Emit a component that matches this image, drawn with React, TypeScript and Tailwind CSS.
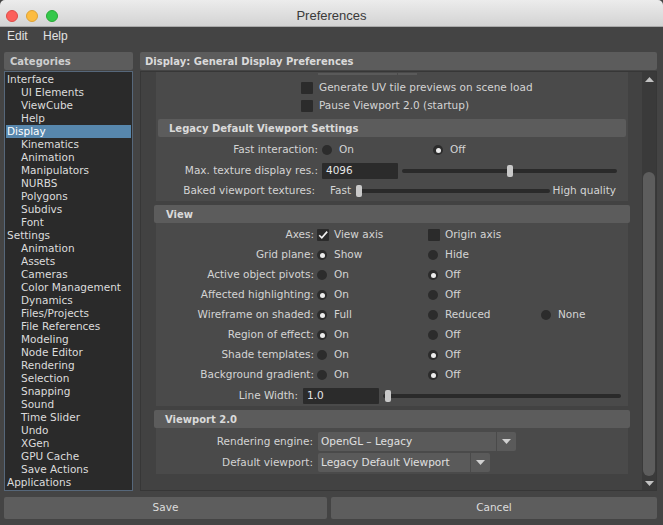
import React from "react";

const categories: { name: string; sub?: boolean; selected?: boolean }[] = [
  { name: "Interface" },
  { name: "UI Elements", sub: true },
  { name: "ViewCube", sub: true },
  { name: "Help", sub: true },
  { name: "Display", selected: true },
  { name: "Kinematics", sub: true },
  { name: "Animation", sub: true },
  { name: "Manipulators", sub: true },
  { name: "NURBS", sub: true },
  { name: "Polygons", sub: true },
  { name: "Subdivs", sub: true },
  { name: "Font", sub: true },
  { name: "Settings" },
  { name: "Animation", sub: true },
  { name: "Assets", sub: true },
  { name: "Cameras", sub: true },
  { name: "Color Management", sub: true },
  { name: "Dynamics", sub: true },
  { name: "Files/Projects", sub: true },
  { name: "File References", sub: true },
  { name: "Modeling", sub: true },
  { name: "Node Editor", sub: true },
  { name: "Rendering", sub: true },
  { name: "Selection", sub: true },
  { name: "Snapping", sub: true },
  { name: "Sound", sub: true },
  { name: "Time Slider", sub: true },
  { name: "Undo", sub: true },
  { name: "XGen", sub: true },
  { name: "GPU Cache", sub: true },
  { name: "Save Actions", sub: true },
  { name: "Applications" },
];

function Radio({ on }: { on?: boolean }) {
  return (
    <span className="w-[10px] h-[10px] rounded-full bg-[#2c2c2c] flex items-center justify-center shrink-0">
      {on && <span className="w-[5px] h-[5px] rounded-full bg-[#ededed]" />}
    </span>
  );
}

function Check({ on }: { on?: boolean }) {
  return (
    <span className="w-[12px] h-[12px] rounded-[1px] bg-[#2b2b2b] shrink-0 flex items-center justify-center">
      {on && (
        <svg width="12" height="12" viewBox="0 0 12 12">
          <polyline points="2.2,6.2 4.8,8.8 10.2,2.6" fill="none" stroke="#f2f2f2" strokeWidth="1.6" />
        </svg>
      )}
    </span>
  );
}

function Option({ label, on, w }: { label: string; on?: boolean; w: string }) {
  return (
    <div className={`flex items-center gap-[7px] ${w}`}>
      <Radio on={on} />
      <span>{label}</span>
    </div>
  );
}

function Slider({ left }: { left: number }) {
  return (
    <div className="relative flex-1 h-[4px] rounded-full bg-[#2a2a2a]">
      <span
        className="absolute top-1/2 -translate-y-1/2 w-[6px] h-[12px] rounded-[2px] bg-[#c9c9c9]"
        style={{ left }}
      />
    </div>
  );
}

function Arrow() {
  return (
    <svg width="9" height="5" viewBox="0 0 9 5">
      <polygon points="0,0 9,0 4.5,5" fill="#d0d0d0" />
    </svg>
  );
}

function Dropdown({ text, w }: { text: string; w: string }) {
  return (
    <div className={`flex h-[19px] gap-[1px] ${w}`}>
      <div className="flex-1 bg-[#5a5a5a] rounded-l-[2px] pl-[3px] flex items-center text-[#e0e0e0]">{text}</div>
      <div className="w-[19px] bg-[#5a5a5a] rounded-r-[2px] flex items-center justify-center">
        <Arrow />
      </div>
    </div>
  );
}

function SectionHeader({ title, pl }: { title: string; pl: string }) {
  return (
    <div className={`h-[18px] bg-[#5c5c5c] rounded-[2px] flex items-center font-bold text-[10px] text-[#dadada] ${pl}`}>
      {title}
    </div>
  );
}

function ViewRow({ label, children }: { label: string; children: React.ReactNode }) {
  return (
    <div className="h-[20px] flex items-center">
      <div className="w-[158px] text-right">{label}</div>
      <div className="ml-[3px] flex items-center">{children}</div>
    </div>
  );
}

export default function App() {
  return (
    <div className="w-[663px] h-[525px] bg-[#444444] font-['DejaVu_Sans',sans-serif] text-[10.5px] text-[#d4d4d4] overflow-hidden flex flex-col">
      <div className="h-[27px] shrink-0 grid grid-cols-[1fr_auto_1fr] items-center pt-[5px] bg-linear-to-b from-[#ececec] to-[#d3d3d3] border-b border-[#aaaaaa] rounded-t-[5px]">
        <div className="flex gap-[8px] pl-[6px]">
          <span className="w-[12px] h-[12px] rounded-full bg-[#fc605b] border border-[#de4c47]" />
          <span className="w-[12px] h-[12px] rounded-full bg-[#fdbc40] border border-[#dea235]" />
          <span className="w-[12px] h-[12px] rounded-full bg-[#34c84a] border border-[#27aa35]" />
        </div>
        <div className="font-['Liberation_Sans',sans-serif] text-[13px] text-[#3a3a3a]">Preferences</div>
        <div />
      </div>

      <div className="h-[17px] shrink-0 flex items-center pl-[7px] font-['Liberation_Sans',sans-serif] text-[12px] text-[#e2e2e2]">
        <span className="w-[36px]">Edit</span>
        <span>Help</span>
      </div>

      <div className="flex pl-[4px] pt-[8px] gap-[7px]">
        <div className="w-[129px] flex flex-col gap-[1px]">
          <div className="h-[18px] bg-[#5c5c5c] rounded-[2px] flex items-center pl-[6px] pt-[1px] font-bold text-[10px] text-[#cfcfcf]">
            Categories
          </div>
          <div className="h-[420px] bg-[#2a2a2a] border border-[#56677a] px-[1px] pt-[1px]">
            {categories.map((c, i) => (
              <div
                key={i}
                className={`h-[13px] leading-[13px] whitespace-nowrap ${c.sub ? "pl-[15px]" : "pl-[1px]"} ${
                  c.selected ? "bg-[#5787ad] text-white" : "text-[#dcdcdc]"
                }`}
              >
                {c.name}
              </div>
            ))}
          </div>
        </div>

        <div className="w-[517px] flex flex-col gap-[1px]">
          <div className="h-[18px] bg-[#5c5c5c] rounded-[2px] flex items-center pl-[5px] pt-[1px] font-bold text-[10px] text-[#dadada]">
            Display: General Display Preferences
          </div>
          <div className="h-[420px] flex border border-[#373737] bg-[#424242]">
            <div className="w-[501px] pl-[13px] pr-[12px] flex flex-col overflow-hidden">
              <div className="bg-[#4a4a4a] mx-[2px] flex flex-col">
                <div className="ml-[162px] mt-[1px] h-[2px] w-[99px] flex gap-[1px]">
                  <span className="flex-1 bg-[#5a5a5a]" />
                  <span className="w-[19px] bg-[#5a5a5a]" />
                </div>
                <div className="h-[18px] mt-[4px] flex items-center pl-[145px] gap-[6px]">
                  <Check />
                  <span>Generate UV tile previews on scene load</span>
                </div>
                <div className="h-[18px] flex items-center pl-[145px] gap-[6px]">
                  <Check />
                  <span>Pause Viewport 2.0 (startup)</span>
                </div>
                <div className="mx-[2px] mt-[4px]">
                  <SectionHeader title="Legacy Default Viewport Settings" pl="pl-[11px]" />
                  <div className="pt-[3px] flex flex-col">
                    <div className="h-[20px] flex items-center">
                      <div className="w-[160px] text-right">Fast interaction:</div>
                      <div className="ml-[4px] flex items-center">
                        <Option label="On" w="w-[111px]" />
                        <Option label="Off" on w="w-[111px]" />
                      </div>
                    </div>
                    <div className="h-[21px] flex items-center pr-[9px]">
                      <div className="w-[160px] text-right">Max. texture display res.:</div>
                      <div className="ml-[4px] w-[76px] h-[16px] bg-[#2b2b2b] rounded-[1px] pl-[4px] flex items-center text-[#e6e6e6]">
                        4096
                      </div>
                      <div className="ml-[4px] flex-1 flex items-center">
                        <Slider left={105} />
                      </div>
                    </div>
                    <div className="h-[20px] flex items-center pr-[10px]">
                      <div className="w-[157px] text-right">Baked viewport textures:</div>
                      <span className="ml-[15px] mr-[5px]">Fast</span>
                      <div className="flex-1 flex items-center">
                        <Slider left={0} />
                      </div>
                      <span className="ml-[3px]">High quality</span>
                    </div>
                  </div>
                </div>
              </div>

              <div className="mt-[4px]">
                <SectionHeader title="View" pl="pl-[12px]" />
                <div className="bg-[#4a4a4a] mx-[2px] pt-[2px] flex flex-col">
                  <ViewRow label="Axes:">
                    <div className="flex items-center gap-[5px] w-[111px]">
                      <Check on />
                      <span>View axis</span>
                    </div>
                    <div className="flex items-center gap-[5px]">
                      <Check />
                      <span>Origin axis</span>
                    </div>
                  </ViewRow>
                  <ViewRow label="Grid plane:">
                    <Option label="Show" on w="w-[111px]" />
                    <Option label="Hide" w="w-[113px]" />
                  </ViewRow>
                  <ViewRow label="Active object pivots:">
                    <Option label="On" w="w-[111px]" />
                    <Option label="Off" on w="w-[113px]" />
                  </ViewRow>
                  <ViewRow label="Affected highlighting:">
                    <Option label="On" on w="w-[111px]" />
                    <Option label="Off" w="w-[113px]" />
                  </ViewRow>
                  <ViewRow label="Wireframe on shaded:">
                    <Option label="Full" on w="w-[111px]" />
                    <Option label="Reduced" w="w-[113px]" />
                    <Option label="None" w="w-[60px]" />
                  </ViewRow>
                  <ViewRow label="Region of effect:">
                    <Option label="On" on w="w-[111px]" />
                    <Option label="Off" w="w-[113px]" />
                  </ViewRow>
                  <ViewRow label="Shade templates:">
                    <Option label="On" w="w-[111px]" />
                    <Option label="Off" on w="w-[113px]" />
                  </ViewRow>
                  <ViewRow label="Background gradient:">
                    <Option label="On" w="w-[111px]" />
                    <Option label="Off" on w="w-[113px]" />
                  </ViewRow>
                  <div className="h-[21px] flex items-center pr-[7px]">
                    <div className="w-[142px] text-right">Line Width:</div>
                    <div className="ml-[5px] w-[76px] h-[16px] bg-[#2b2b2b] rounded-[1px] pl-[4px] flex items-center text-[#e6e6e6]">
                      1.0
                    </div>
                    <div className="ml-[4px] flex-1 flex items-center">
                      <Slider left={2} />
                    </div>
                  </div>
                </div>
              </div>

              <div className="mt-[4px]">
                <SectionHeader title="Viewport 2.0" pl="pl-[11px]" />
                <div className="bg-[#4a4a4a] mx-[2px] pt-[4px] pb-[2px] flex flex-col gap-[2px]">
                  <div className="flex items-center">
                    <div className="w-[157px] text-right">Rendering engine:</div>
                    <div className="ml-[5px]">
                      <Dropdown text="OpenGL – Legacy" w="w-[198px]" />
                    </div>
                  </div>
                  <div className="flex items-center">
                    <div className="w-[157px] text-right">Default viewport:</div>
                    <div className="ml-[5px]">
                      <Dropdown text="Legacy Default Viewport" w="w-[172px]" />
                    </div>
                  </div>
                </div>
              </div>
            </div>

            <div className="w-[14px] bg-[#3a3a3a] flex flex-col items-center pt-[5px] pb-[1px]">
              <svg width="9" height="5" viewBox="0 0 9 5">
                <polygon points="4.5,0 9,5 0,5" fill="#c2c2c2" />
              </svg>
              <div className="flex-1 w-full px-[1px] pt-[90px] pb-[5px] flex">
                <div className="flex-1 rounded-full bg-[#5d5d5d]" />
              </div>
              <svg width="9" height="5" viewBox="0 0 9 5">
                <polygon points="0,0 9,0 4.5,5" fill="#c2c2c2" />
              </svg>
              <div className="h-[3px]" />
            </div>
          </div>
        </div>
      </div>

      <div className="flex pl-[4px] mt-[6px] gap-[4px]">
        <button className="w-[323px] h-[22px] bg-[#5d5d5d] rounded-[2px] text-[#dedede]">Save</button>
        <button className="w-[326px] h-[22px] bg-[#5d5d5d] rounded-[2px] text-[#dedede]">Cancel</button>
      </div>
    </div>
  );
}
